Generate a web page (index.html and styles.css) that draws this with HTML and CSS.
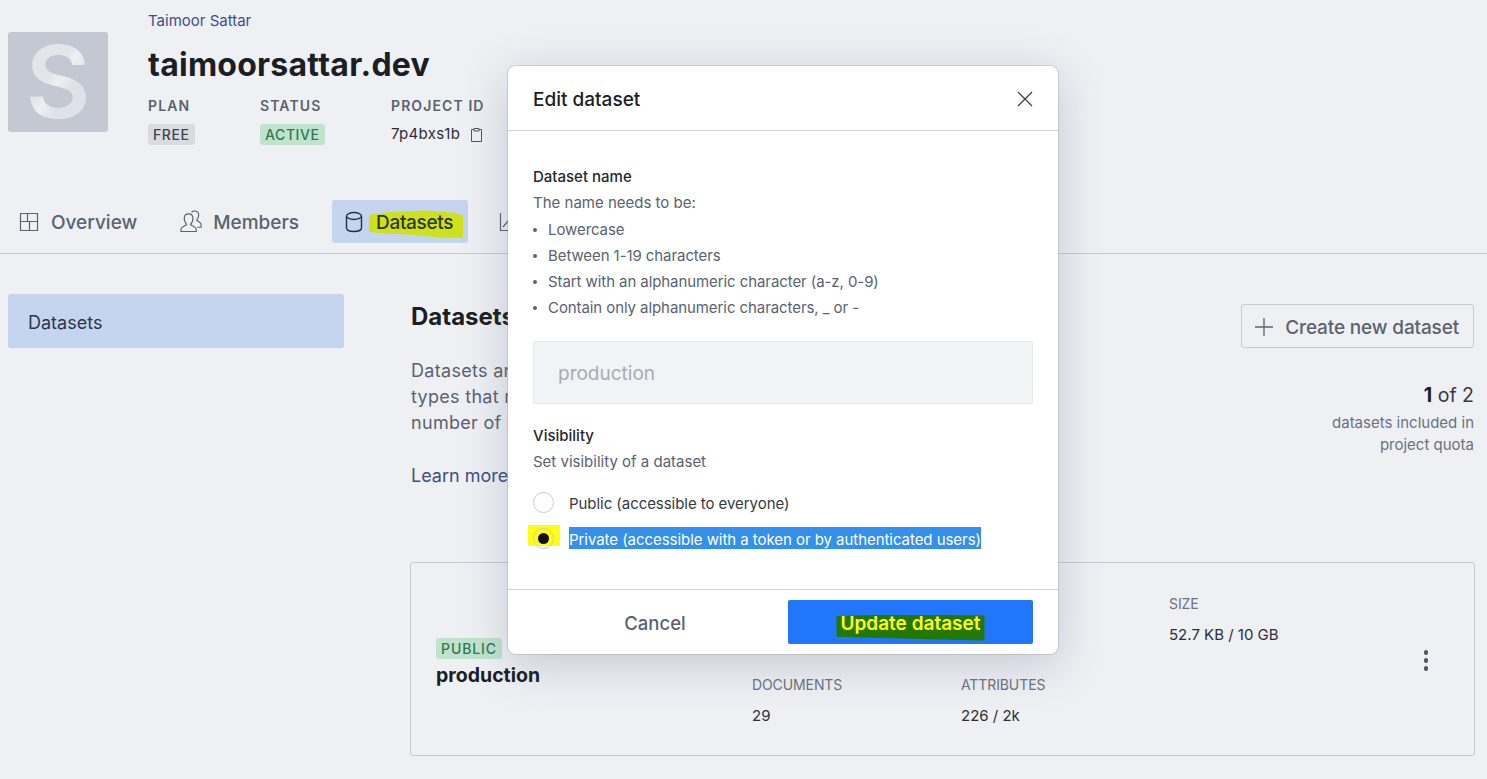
FILE: index.html
```html
<!DOCTYPE html>
<html lang="en">
<head>
    <meta charset="UTF-8">
    <meta name="viewport" content="width=device-width, initial-scale=1.0">
    <title>Edit dataset</title>
    <link rel="stylesheet" href="styles.css">
</head>
<body>
<div class="page">
    <header class="project">
        <div class="avatar"><span class="avatar-letter">S</span></div>
        <div class="project-info">
            <a class="org-name">Taimoor Sattar</a>
            <h1 class="project-name">taimoorsattar.dev</h1>
            <div class="meta">
                <div class="meta-item meta-plan">
                    <div class="meta-label">PLAN</div>
                    <span class="badge badge-grey">FREE</span>
                </div>
                <div class="meta-item meta-status">
                    <div class="meta-label">STATUS</div>
                    <span class="badge badge-green">ACTIVE</span>
                </div>
                <div class="meta-item">
                    <div class="meta-label">PROJECT ID</div>
                    <div class="project-id">7p4bxs1b
                        <svg class="copy-icon" width="13" height="16" viewBox="0 0 13 16" fill="none" stroke="#4d5563" stroke-width="1"><path d="M4 2.500H1.500v12h10v-12H9"/><path d="M4 1.500h5v2.500H4z"/></svg>
                    </div>
                </div>
            </div>
        </div>
    </header>

    <nav class="tabs">
        <a class="tab tab-overview">
            <svg width="20" height="20" viewBox="0 0 20 20" fill="none" stroke="currentColor" stroke-width="1.200"><path d="M1.500 1.500h17v17h-17z"/><path d="M1.500 9.500h17M8.500 1.500v8M10.500 9.500v9"/></svg>
            <span class="tab-label">Overview</span>
        </a>
        <a class="tab">
            <svg width="22" height="23" viewBox="0 0 23 24" fill="none" stroke="currentColor" stroke-width="1.200"><path d="M1 22.500v-2.500c0-2.500 5-3 6-5-2-2-2.800-4.500-2.500-7 .3-2.500 2.200-4 4.500-4s4.200 1.500 4.500 4c.3 2.500-.5 5-2.500 7 1 2 6 2.500 6 5v2.500z"/><path d="M12 2.500c1-1.200 2.500-1.800 4-1.500 2.300.4 3.600 2.200 3.500 4.500-.1 2-.8 3.800-2 5 1 1.500 4.500 2 4.500 4.500v3h-4"/></svg>
            <span class="tab-label">Members</span>
        </a>
        <a class="tab tab-active">
            <svg width="18" height="22" viewBox="0 0 18 22" fill="none" stroke="currentColor" stroke-width="1.400"><path d="M1.500 5v12c0 2 3 3.500 7.500 3.500s7.500-1.500 7.500-3.500V5"/><ellipse cx="9" cy="5" rx="7.500" ry="3.500"/></svg>
            <span class="tab-label marker">Datasets</span>
        </a>
        <a class="tab">
            <svg width="20" height="20" viewBox="0 0 20 20" fill="none" stroke="currentColor" stroke-width="1.200"><path d="M1.500 1v17.500H19"/><path d="M4 15l5-6 4 4 6-8"/></svg>
            <span class="tab-label">Usage</span>
        </a>
    </nav>

    <div class="main">
        <aside class="sidebar">
            <a class="side-item">Datasets</a>
        </aside>
        <section class="content">
            <div class="content-top">
                <div class="intro">
                    <h2 class="section-title">Datasets</h2>
                    <p class="intro-text">Datasets are collections of documents of different<br>types that represent your content. Projects have a<br>number of datasets depending on the plan.</p>
                    <a class="learn-more">Learn more about datasets</a>
                </div>
                <div class="quota-col">
                    <button class="create-btn">
                        <svg width="20" height="20" viewBox="0 0 20 20" fill="none" stroke="currentColor" stroke-width="1.300"><path d="M10 1v18M1 10h18"/></svg>
                        Create new dataset
                    </button>
                    <div class="quota-count"><b>1</b> of 2</div>
                    <div class="quota-note">datasets included in<br>project quota</div>
                </div>
            </div>
            <div class="card">
                <div class="card-name">
                    <span class="badge badge-green badge-public">PUBLIC</span>
                    <div class="dataset-name">production</div>
                </div>
                <div class="stats">
                    <div class="stat stat-docs">
                        <div class="stat-label">DOCUMENTS</div>
                        <div class="stat-value">29</div>
                    </div>
                    <div class="stat stat-attrs">
                        <div class="stat-label">ATTRIBUTES</div>
                        <div class="stat-value">226 / 2k</div>
                    </div>
                    <div class="stat stat-size">
                        <div class="stat-label">SIZE</div>
                        <div class="stat-value">52.7 KB / 10 GB</div>
                    </div>
                </div>
                <button class="more-btn" aria-label="More"><i></i><i></i><i></i></button>
            </div>
        </section>
    </div>
</div>

<div class="modal">
    <div class="modal-head">
        <h3 class="modal-title">Edit dataset</h3>
        <svg class="close-icon" width="16" height="16" viewBox="0 0 16 16" fill="none" stroke="#3a404c" stroke-width="1.300"><path d="M1 1l14 14M15 1L1 15"/></svg>
    </div>
    <div class="modal-body">
        <div class="field-label">Dataset name</div>
        <div class="field-help">The name needs to be:</div>
        <ul class="rules">
            <li>Lowercase</li>
            <li>Between 1-19 characters</li>
            <li>Start with an alphanumeric character (a-z, 0-9)</li>
            <li>Contain only alphanumeric characters, _ or -</li>
        </ul>
        <div class="name-input">production</div>
        <div class="field-label">Visibility</div>
        <div class="field-help">Set visibility of a dataset</div>
        <div class="radio-row radio-first">
            <span class="radio"></span>
            <span class="radio-text">Public (accessible to everyone)</span>
        </div>
        <div class="radio-row">
            <span class="radio-mark"><span class="radio radio-on"></span></span>
            <span class="radio-text selected">Private (accessible with a token or by authenticated users)</span>
        </div>
    </div>
    <div class="modal-foot">
        <button class="cancel-btn">Cancel</button>
        <button class="update-btn"><span class="update-text">Update dataset</span></button>
    </div>
</div>
</body>
</html>
```

FILE: styles.css
```css
* {
    box-sizing: border-box;
}
html, body {
    margin: 0;
    height: 100%;
}
body {
    background: #eef0f4;
    color: #1f2229;
    font-family: Inter, "Liberation Sans", sans-serif;
    overflow: hidden;
}
.page {
    height: 779px;
    overflow: hidden;
}

/* project header */
.project {
    display: flex;
    gap: 40px;
    padding: 12px 8px 0;
    height: 200px;
}
.avatar {
    width: 100px;
    height: 100px;
    margin-top: 20px;
    background: #c4c8d2;
    border-radius: 3px;
    display: flex;
    align-items: center;
    justify-content: center;
}
.avatar-letter {
    font-size: 100px;
    font-weight: 600;
    line-height: 1.1;
    background: linear-gradient(125deg, #e3e5ea 42%, #eff0f4 50%, #dfe2e8 62%);
    -webkit-background-clip: text;
    background-clip: text;
    color: transparent;
}
.org-name {
    display: block;
    font-size: 15px;
    line-height: 17px;
    color: #3f4f82;
}
.project-name {
    margin: 17px 0 0;
    font-size: 32px;
    line-height: 38px;
    font-weight: 700;
    letter-spacing: 0.25px;
    color: #1b1e25;
}
.meta {
    display: flex;
    margin-top: 13px;
}
.meta-plan {
    width: 112px;
}
.meta-status {
    width: 131px;
}
.meta-label {
    font-size: 14px;
    line-height: 17px;
    font-weight: 600;
    letter-spacing: 1.1px;
    color: #5b6270;
}
.badge {
    display: inline-block;
    margin-top: 10px;
    padding: 0 5px;
    height: 21px;
    line-height: 21px;
    font-size: 14px;
    font-weight: 500;
    letter-spacing: 0.6px;
    border-radius: 3px;
}
.badge-grey {
    background: #d9dbe1;
    color: #3f4450;
}
.badge-green {
    background: #bfe3cd;
    color: #2f7a52;
}
.badge-public {
    letter-spacing: 0.9px;
}
.project-id {
    display: flex;
    align-items: center;
    gap: 10px;
    margin-top: 9px;
    height: 21px;
    font-size: 15px;
    letter-spacing: 0.3px;
    color: #2b2f38;
}
.copy-icon {
    margin-top: 2px;
}

/* tabs */
.tabs {
    display: flex;
    height: 54px;
    padding: 0 8px 10px;
    border-bottom: 1px solid #c6cad3;
    gap: 20px;
}
.tab {
    display: flex;
    align-items: center;
    gap: 11px;
    padding: 0 13px 0 11px;
    border-radius: 3px;
    font-size: 19px;
    font-weight: 500;
    color: #5b6270;
    white-space: nowrap;
}
.tab-label {
    margin-top: 2px;
}
.tab-overview {
    gap: 12px;
    padding-right: 12px;
}
.tab-active {
    background: #c5d5ef;
    color: #2b3040;
    padding: 0 15px 0 13px;
    gap: 13px;
    isolation: isolate;
}
.marker {
    position: relative;
    letter-spacing: -0.35px;
    color: #2b3a1c;
}
.marker::before {
    content: "";
    position: absolute;
    left: -7px;
    right: -10px;
    top: -1px;
    bottom: -4px;
    z-index: -1;
    background: #cfe01c;
    clip-path: polygon(0 18%, 20% 8%, 60% 2%, 90% 10%, 100% 20%, 100% 100%, 75% 98%, 45% 88%, 15% 84%, 0 78%);
}

/* main area */
.main {
    display: flex;
    padding: 40px 12px 0 8px;
}
.sidebar {
    width: 336px;
    flex: none;
}
.side-item {
    display: block;
    height: 54px;
    line-height: 54px;
    padding: 2px 0 0 20px;
    background: #c5d5ef;
    border-radius: 3px;
    font-size: 18px;
    color: #2c3550;
}
.content {
    flex: 1;
    margin-left: 66px;
    min-width: 0;
}
.content-top {
    display: flex;
    justify-content: space-between;
    height: 268px;
}
.intro {
    padding-left: 1px;
}
.section-title {
    margin: 8px 0 0;
    font-size: 24px;
    line-height: 30px;
    font-weight: 700;
    color: #1b1e25;
}
.intro-text {
    margin: 26px 0 0;
    font-size: 18px;
    line-height: 26px;
    letter-spacing: 0.3px;
    color: #5b6270;
}
.learn-more {
    display: block;
    margin-top: 29px;
    font-size: 18px;
    color: #3f4f82;
}
.quota-col {
    text-align: right;
    padding-right: 1px;
}
.create-btn {
    display: inline-flex;
    align-items: center;
    gap: 11px;
    height: 44px;
    margin-top: 10px;
    padding: 2px 14px 0 12px;
    background: transparent;
    border: 1px solid #c6cad3;
    border-radius: 3px;
    font: 500 19px Inter, "Liberation Sans", sans-serif;
    letter-spacing: -0.15px;
    color: #5b6270;
}
.quota-count {
    margin-top: 32px;
    font-size: 19.5px;
    line-height: 30px;
    color: #343944;
}
.quota-count b {
    color: #1b1e25;
}
.quota-note {
    margin-top: 2px;
    font-size: 15px;
    line-height: 22px;
    color: #6b7280;
}

/* dataset card */
.card {
    position: relative;
    display: flex;
    height: 194px;
    border: 1px solid #c6cad3;
    border-radius: 3px;
}
.card-name {
    width: 315px;
    padding: 75px 0 0 25px;
}
.card-name .badge {
    margin-top: 0;
}
.dataset-name {
    margin-top: 3px;
    font-size: 19.5px;
    line-height: 26px;
    font-weight: 700;
    color: #1b1e25;
}
.stats {
    display: grid;
    grid-template-columns: 209px 208px 1fr;
    grid-template-rows: 81px 1fr;
    padding-top: 31px;
    margin-left: 26px;
    flex: 1;
}
.stat-docs {
    grid-column: 1;
    grid-row: 2;
}
.stat-attrs {
    grid-column: 2;
    grid-row: 2;
}
.stat-size {
    grid-column: 3;
    grid-row: 1;
}
.stat-label {
    font-size: 14px;
    line-height: 20px;
    letter-spacing: -0.1px;
    color: #6b7280;
}
.stat-value {
    margin-top: 11px;
    font-size: 15px;
    line-height: 20px;
    color: #2b2f38;
}
.more-btn {
    position: absolute;
    right: 46px;
    top: 87px;
    display: flex;
    flex-direction: column;
    gap: 3.5px;
    padding: 0;
    background: none;
    border: 0;
}
.more-btn i {
    display: block;
    width: 4.5px;
    height: 4.5px;
    border-radius: 50%;
    background: #4d5563;
}

/* modal */
.modal {
    position: absolute;
    left: 508px;
    top: 66px;
    width: 550px;
    height: 588px;
    display: flex;
    flex-direction: column;
    background: #fff;
    border-radius: 8px;
    box-shadow: 0 0 0 1px rgba(120, 126, 140, 0.25), 0 10px 45px rgba(90, 98, 115, 0.28);
}
.modal-head {
    display: flex;
    align-items: center;
    justify-content: space-between;
    height: 65px;
    padding: 2px 25px 0;
    border-bottom: 1px solid #cdd0d8;
    flex: none;
}
.modal-title {
    margin: 0;
    font-size: 19px;
    font-weight: 500;
    color: #1b1e25;
}
.modal-body {
    flex: 1;
    padding: 36px 25px 0;
}
.field-label {
    font-size: 15px;
    line-height: 20px;
    font-weight: 500;
    color: #24272f;
}
.field-help {
    margin-top: 6px;
    font-size: 15px;
    line-height: 20px;
    color: #5b6270;
}
.rules {
    list-style: none;
    margin: 4px 0 0;
    padding: 0;
}
.rules li {
    position: relative;
    padding-left: 15px;
    font-size: 15px;
    line-height: 26px;
    letter-spacing: -0.08px;
    color: #5b6270;
}
.rules li::before {
    content: "";
    position: absolute;
    left: 0;
    top: 11px;
    width: 4px;
    height: 4px;
    border-radius: 50%;
    background: #5b6270;
}
.name-input {
    height: 63px;
    line-height: 63px;
    margin: 20px 0 22px;
    padding-left: 24px;
    background: #f1f3f5;
    border: 1px solid #e6e8ec;
    border-radius: 2px;
    font-size: 19px;
    color: #a7acb6;
}
.radio-row {
    display: flex;
    align-items: center;
    gap: 15px;
    height: 22px;
    margin-top: 14px;
    font-size: 15px;
    letter-spacing: -0.05px;
    color: #343944;
}
.radio-first {
    margin-top: 19px;
}
.radio-text {
    height: 22px;
    line-height: 25px;
}
.radio {
    display: block;
    flex: none;
    width: 21px;
    height: 21px;
    border: 1px solid #c6cad3;
    border-radius: 50%;
    background: #fff;
}
.radio-mark {
    flex: none;
    align-self: flex-start;
    display: block;
    width: 32px;
    height: 21px;
    margin: -2px -6px 0 -5px;
    padding: 2.5px 0 0 5px;
    background: #ffff14;
}
.radio-on {
    background: transparent;
    position: relative;
}
.radio-on::after {
    content: "";
    position: absolute;
    left: 4px;
    top: 4px;
    width: 11px;
    height: 11px;
    border-radius: 50%;
    background: #111;
}
.selected {
    background: #3390ec;
    color: #fff;
}
.modal-foot {
    display: flex;
    align-items: center;
    height: 65px;
    padding: 0 25px 0 0;
    border-top: 1px solid #cdd0d8;
    flex: none;
}
.cancel-btn {
    width: 280px;
    height: 44px;
    padding: 2px 0 0 14px;
    background: none;
    border: 0;
    font: 500 18.5px Inter, "Liberation Sans", sans-serif;
    color: #5b6270;
}
.update-btn {
    width: 245px;
    height: 44px;
    padding: 2px 0 0;
    background: #2276fc;
    border: 0;
    border-radius: 2px;
    isolation: isolate;
    font: 600 19px Inter, "Liberation Sans", sans-serif;
}
.update-text {
    position: relative;
    color: #ffff14;
}
.update-text::before {
    content: "";
    position: absolute;
    left: -4px;
    right: -4px;
    top: 3px;
    bottom: -6px;
    z-index: -1;
    background: #237804;
    clip-path: polygon(0 6%, 40% 0, 100% 4%, 100% 100%, 70% 96%, 30% 90%, 0 86%);
}
```
